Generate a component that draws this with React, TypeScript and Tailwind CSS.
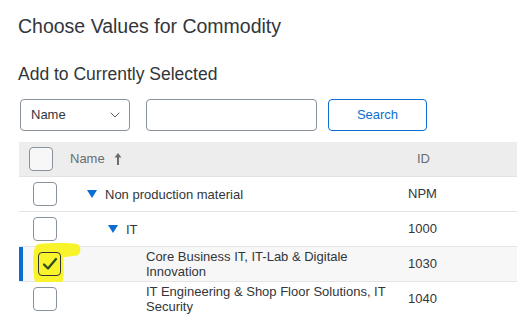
import { ChevronDown } from "lucide-react";

type Row = {
    id: string;
    level: number;
    lines: string[];
    expandable?: boolean;
    selected?: boolean;
};

const rows: Row[] = [
    { id: "NPM", level: 0, lines: ["Non production material"], expandable: true },
    { id: "1000", level: 1, lines: ["IT"], expandable: true },
    { id: "1030", level: 2, lines: ["Core Business IT, IT-Lab & Digitale", "Innovation"], selected: true },
    { id: "1040", level: 2, lines: ["IT Engineering & Shop Floor Solutions, IT", "Security"] },
];

const indent = ["pl-[17px]", "pl-[38px]", "pl-[76px]"];

const Triangle = () => (
    <svg width="10" height="9" viewBox="0 0 10 9" className="mr-[8px] shrink-0">
        <path d="M0 0 H10 L5 8 Z" fill="#0a6ed1" />
    </svg>
);

const SortUp = () => (
    <svg width="8" height="12" viewBox="0 0 8 12" className="ml-[9px]">
        <path d="M4 0 L7.5 4.5 H0.5 Z" fill="#6a6d70" />
        <rect x="3" y="3" width="2" height="9" fill="#6a6d70" />
    </svg>
);

// marker scribble drawn over the selected checkbox
const Highlight = () => (
    <svg width="50" height="44" viewBox="0 0 50 44" className="absolute left-[14px] top-[-4px] pointer-events-none">
        <path
            d="M6 1 C16 0 34 -0.5 44 1 C48.5 2 48.5 11 44 12.5 C38 13.5 33 13.5 30 14.5 C31 22 31 32 30 37 C29 41.5 24 42.5 15 42.5 C6 42.5 1 40 1 34 C0 25 0 14 1 8 C2 3 3 2 6 1 Z"
            fill="#f8f32b"
        />
    </svg>
);

export default function App() {
    return (
        <div className="w-[529px] h-[314px] overflow-hidden bg-white font-['Liberation_Sans',Arial,sans-serif] text-[#32363a]">
            <h1 className="pl-[18px] pt-[14px] text-[19.5px] leading-[24px]">Choose Values for Commodity</h1>
            <h2 className="pl-[18px] mt-[26px] text-[17.5px] leading-[20px]">Add to Currently Selected</h2>

            <div className="flex items-center pl-[20px] mt-[15px] h-[32px]">
                <div className="w-[110px] h-[32px] border border-[#89919a] rounded-[4px] flex items-center justify-between pl-[10px] pr-[6px]">
                    <span className="text-[13px] text-[#32363a]">Name</span>
                    <ChevronDown size={16} strokeWidth={1.2} className="text-[#32363a]" />
                </div>
                <div className="ml-[16px] w-[171px] h-[32px] border border-[#89919a] rounded-[4px]" />
                <button className="ml-[11px] w-[99px] h-[32px] border border-[#0a6ed1] rounded-[4px] text-[13px] text-[#0a6ed1] bg-white">
                    Search
                </button>
            </div>

            <div className="ml-[19px] w-[498px] mt-[11px]">
                <div className="flex items-center h-[35px] bg-[#ededed] border-b border-[#e2e2e2]">
                    <div className="w-[51px] pl-[10px] shrink-0">
                        <div className="w-[24px] h-[24px] border border-[#89919a] rounded-[4px] bg-[#f7f7f7]" />
                    </div>
                    <div className="flex items-center flex-1 text-[13px] text-[#6a6d70]">
                        Name
                        <SortUp />
                    </div>
                    <div className="w-[100px] text-[13px] text-[#6a6d70]">ID</div>
                </div>

                {rows.map((r) => (
                    <div
                        key={r.id}
                        className={`relative flex items-center h-[35px] border-b border-[#e5e5e5] ${r.selected ? "bg-[#f7f7f7]" : "bg-white"}`}
                    >
                        {r.selected && <div className="absolute left-0 top-0 bottom-0 w-[4px] bg-[#0a6ed1]" />}
                        {r.selected && <Highlight />}
                        <div className="w-[51px] pl-[14px] shrink-0 relative">
                            <div
                                className={`h-[24px] border rounded-[4px] flex items-center justify-center ${r.selected ? "border-[#32363a] ml-[5px] w-[23px]" : "w-[24px] border-[#89919a] bg-white"}`}
                            >
                                {r.selected && (
                                    <svg width="16" height="14" viewBox="0 0 16 14">
                                        <path d="M2 7.5 L6 11.5 L14 2" fill="none" stroke="#2b4a1e" strokeWidth="2.2" strokeLinecap="round" strokeLinejoin="round" />
                                    </svg>
                                )}
                            </div>
                        </div>
                        <div className={`flex items-center flex-1 text-[13px] leading-[15px] ${indent[r.level]}`}>
                            {r.expandable && <Triangle />}
                            <div>
                                {r.lines.map((l) => (
                                    <div key={l}>{l}</div>
                                ))}
                            </div>
                        </div>
                        <div className="w-[109px] text-[13px] text-[#32363a] shrink-0">{r.id}</div>
                    </div>
                ))}
            </div>
        </div>
    );
}
